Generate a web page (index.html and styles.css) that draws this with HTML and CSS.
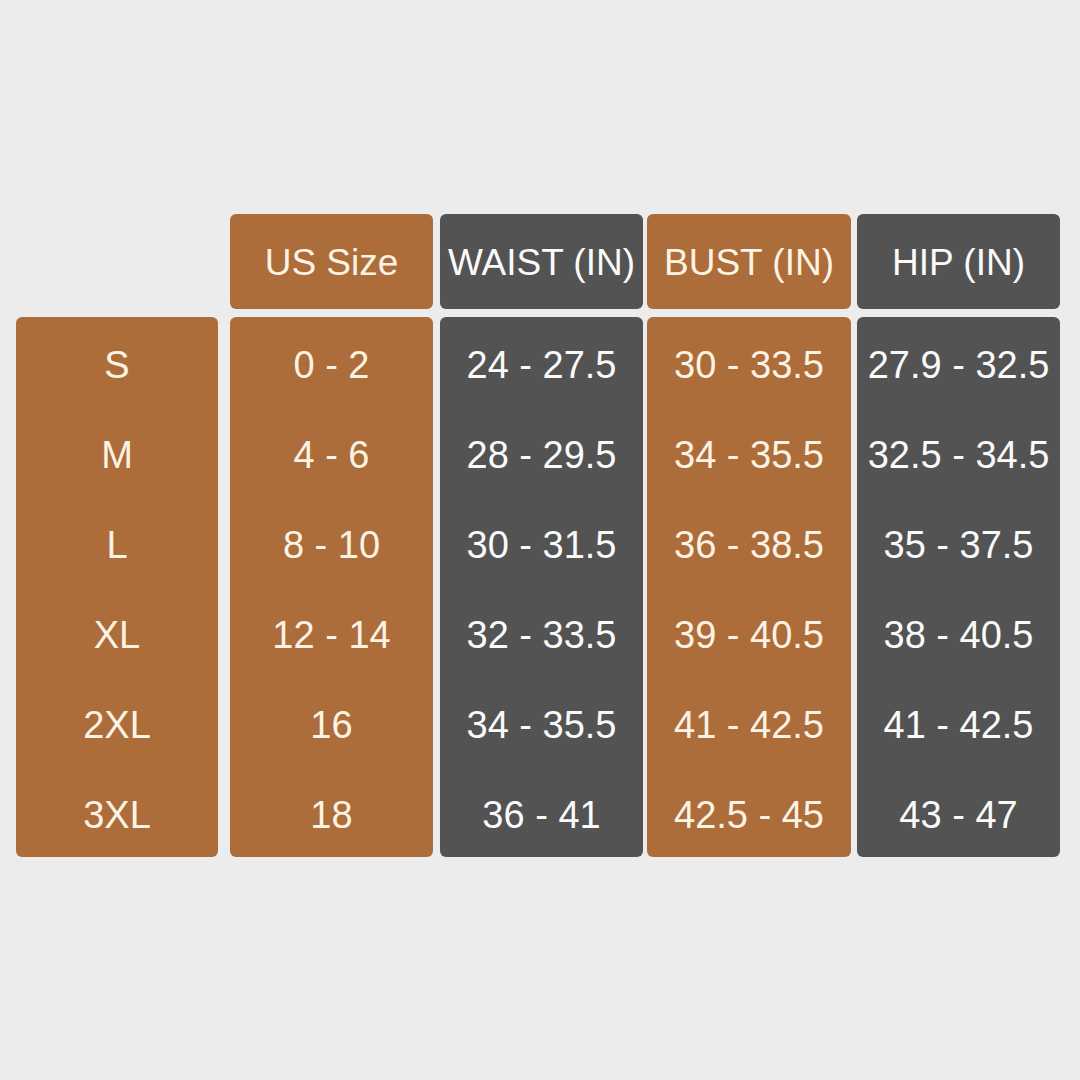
FILE: index.html
```html
<!DOCTYPE html>
<html>
<head>
<meta charset="utf-8">
<link rel="stylesheet" href="styles.css">
</head>
<body>
<div class="chart">
  <div class="head empty c1"></div>
  <div class="head orange c2">US Size</div>
  <div class="head gray c3">WAIST (IN)</div>
  <div class="head orange c4">BUST (IN)</div>
  <div class="head gray c5">HIP (IN)</div>

  <div class="col orange c1">
    <div class="cell">S</div><div class="cell">M</div><div class="cell">L</div>
    <div class="cell">XL</div><div class="cell">2XL</div><div class="cell">3XL</div>
  </div>
  <div class="col orange c2">
    <div class="cell">0 - 2</div><div class="cell">4 - 6</div><div class="cell">8 - 10</div>
    <div class="cell">12 - 14</div><div class="cell">16</div><div class="cell">18</div>
  </div>
  <div class="col gray c3">
    <div class="cell">24 - 27.5</div><div class="cell">28 - 29.5</div><div class="cell">30 - 31.5</div>
    <div class="cell">32 - 33.5</div><div class="cell">34 - 35.5</div><div class="cell">36 - 41</div>
  </div>
  <div class="col orange c4">
    <div class="cell">30 - 33.5</div><div class="cell">34 - 35.5</div><div class="cell">36 - 38.5</div>
    <div class="cell">39 - 40.5</div><div class="cell">41 - 42.5</div><div class="cell">42.5 - 45</div>
  </div>
  <div class="col gray c5">
    <div class="cell">27.9 - 32.5</div><div class="cell">32.5 - 34.5</div><div class="cell">35 - 37.5</div>
    <div class="cell">38 - 40.5</div><div class="cell">41 - 42.5</div><div class="cell">43 - 47</div>
  </div>
</div>
</body>
</html>
```
FILE: styles.css
```css
html, body {
  margin: 0;
  padding: 0;
  background: #ececec;
}
body {
  width: 1080px;
  height: 1080px;
  font-family: "Liberation Sans", Arial, sans-serif;
}
.chart {
  display: grid;
  grid-template-columns: 202px 12px 203px 7px 203px 4px 204px 6px 203px;
  grid-template-rows: 95px 540px;
  row-gap: 8px;
  padding: 214px 0 0 16px;
}
.c1 { grid-column: 1; }
.c2 { grid-column: 3; }
.c3 { grid-column: 5; }
.c4 { grid-column: 7; }
.c5 { grid-column: 9; }
.head {
  grid-row: 1;
  border-radius: 6px;
  display: flex;
  align-items: center;
  justify-content: center;
  font-size: 37px;
  padding-top: 2px;
  box-sizing: border-box;
  white-space: nowrap;
}
.head.empty { background: transparent; }
.col {
  grid-row: 2;
  border-radius: 6px;
  display: flex;
  flex-direction: column;
}
.cell {
  height: 90px;
  display: flex;
  align-items: center;
  justify-content: center;
  font-size: 38px;
  padding-top: 6px;
  box-sizing: border-box;
  white-space: nowrap;
}
.orange {
  background: #ac6d3b;
  color: #fdf3e4;
}
.gray {
  background: #535353;
  color: #fafafa;
}
.head.empty { background: transparent; }
```
